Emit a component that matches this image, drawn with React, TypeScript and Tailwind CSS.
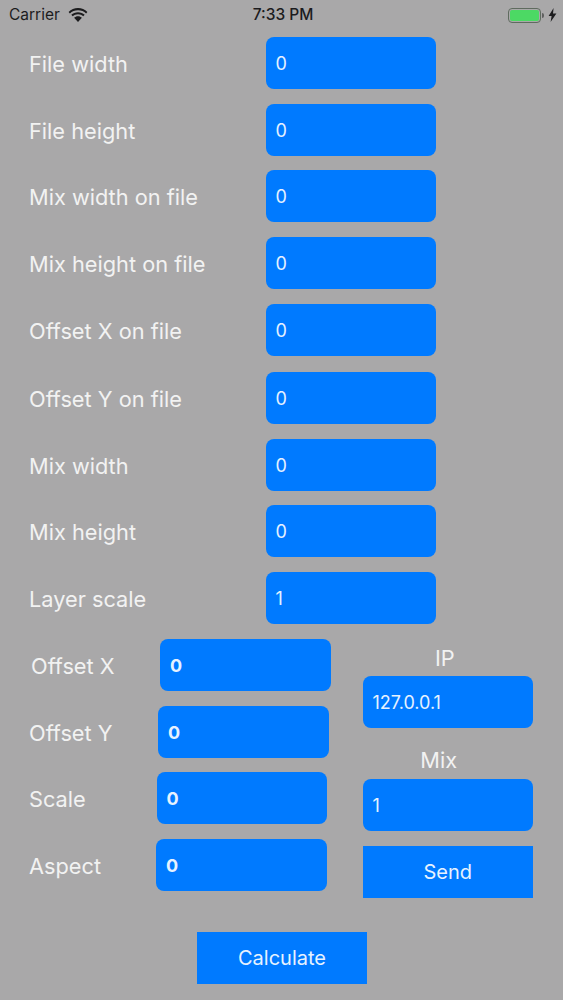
const font = "font-['Inter','Liberation_Sans',sans-serif]";

const topRows = [
  { label: "File width", value: "0", mt: "mt-0" },
  { label: "File height", value: "0", mt: "mt-[15px]" },
  { label: "Mix width on file", value: "0", mt: "mt-[14px]" },
  { label: "Mix height on file", value: "0", mt: "mt-[15px]" },
  { label: "Offset X on file", value: "0", mt: "mt-[15px]" },
  { label: "Offset Y on file", value: "0", mt: "mt-[16px]" },
  { label: "Mix width", value: "0", mt: "mt-[15px]" },
  { label: "Mix height", value: "0", mt: "mt-[14px]" },
  { label: "Layer scale", value: "1", mt: "mt-[15px]" },
];

const offsetRows = [
  { label: "Offset X", mt: "mt-0", labelCls: "w-[160px] pl-[31px]" },
  { label: "Offset Y", mt: "mt-[15px]", labelCls: "w-[158px] pl-[29px]" },
  { label: "Scale", mt: "mt-[14px]", labelCls: "w-[156.500px] pl-[29px]" },
  { label: "Aspect", mt: "mt-[15px]", labelCls: "w-[156px] pl-[29px]" },
];

function Field({ value, bold, className = "" }: { value: string; bold?: boolean; className?: string }) {
  return (
    <div
      className={`flex h-[52px] items-center rounded-[8px] bg-[#007aff] pl-[10px] text-[18px] text-[#e6f2ff] ${
        bold ? "font-bold" : ""
      } ${className}`}
    >
      {value}
    </div>
  );
}

function Wifi() {
  return (
    <svg width="20" height="14" viewBox="0 0 20 14" className="text-[#1c1c1e]" fill="currentColor">
      <path d="M10 2.2c3.2 0 6 1.2 8.100 3.200l1.300-1.500C16.900 1.500 13.600 0 10 0S3.100 1.500.6 3.900l1.300 1.500C4 3.400 6.800 2.200 10 2.200z" />
      <path d="M10 6.300c2.100 0 3.900.8 5.300 2l1.400-1.500C14.900 5.200 12.600 4.200 10 4.200s-4.900 1-6.700 2.600l1.400 1.500c1.400-1.200 3.200-2 5.300-2z" />
      <path d="M10 8.300c-1.500 0-2.900.6-3.900 1.500L10 14l3.900-4.200c-1-.9-2.400-1.500-3.900-1.500z" />
    </svg>
  );
}

function StatusBar() {
  return (
    <div className="flex h-[30px] items-center justify-between pl-[9px] pr-[6px] text-[15.500px] text-[#1c1c1e]">
      <div className="flex w-[200px] items-center gap-[8px]">
        <span>Carrier</span>
        <Wifi />
      </div>
      <span className="font-medium">7:33 PM</span>
      <div className="flex w-[200px] items-center justify-end">
        <div className="flex h-[15px] w-[33px] items-center rounded-[4px] border border-[#5f6b5f] p-[1px]">
          <div className="h-full w-full rounded-[2px] bg-[#4cd964]" />
        </div>
        <div className="ml-[1px] h-[5px] w-[1.500px] rounded-r-full bg-[#5f5f5f]" />
        <svg width="9" height="14" viewBox="0 0 9 14" className="ml-[4px]" fill="#1c1c1e">
          <path d="M5.600 0 .6 8h3l-1 6 5.800-8.400H5z" />
        </svg>
      </div>
    </div>
  );
}

export default function App() {
  return (
    <div className={`${font} h-[1000px] w-[563px] overflow-hidden bg-[#a9a8a9] text-[21.750px] text-[#f2f2f2]`}>
      <StatusBar />
      <div className="mt-[7px]">
        {topRows.map((r) => (
          <div key={r.label} className={`flex items-center ${r.mt}`}>
            <span className="w-[265.500px] pl-[29px] pt-[3px]">{r.label}</span>
            <Field value={r.value} className="w-[170.500px]" />
          </div>
        ))}
      </div>

      <div className="mt-[15px] flex">
        <div className="w-[362.500px]">
          {offsetRows.map((r) => (
            <div key={r.label} className={`flex items-center ${r.mt}`}>
              <span className={`${r.labelCls} pt-[3px]`}>{r.label}</span>
              <Field value="0" bold className="w-[170.500px]" />
            </div>
          ))}
        </div>
        <div className="w-[170.500px]">
          <div className="flex h-[37px] items-center justify-center pr-[6px] pt-[2px]">IP</div>
          <Field value="127.0.0.1" />
          <div className="flex h-[51px] items-end justify-center pb-[2px] pr-[18px]">Mix</div>
          <Field value="1" />
          <div className="mt-[15px] flex h-[52px] items-center justify-center bg-[#007aff] text-[20px] text-[#e6f2ff]">
            Send
          </div>
        </div>
      </div>

      <div className="ml-[197px] mt-[34px] flex h-[52px] w-[170px] items-center justify-center bg-[#007aff] text-[20px] text-[#e6f2ff]">
        Calculate
      </div>
    </div>
  );
}
